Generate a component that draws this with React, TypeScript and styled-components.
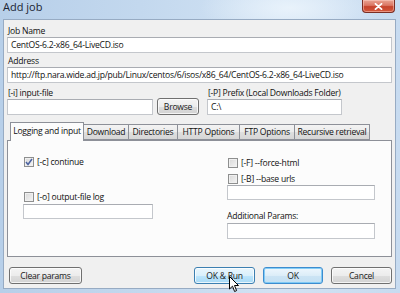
import React from "react";
import styled, { createGlobalStyle } from "styled-components";

const Global = createGlobalStyle`
  html, body { margin: 0; padding: 0; }
  body {
    width: 400px; height: 293px; overflow: hidden;
    font-family: "Open Sans", "Noto Sans", sans-serif;
    font-size: 8.6px; letter-spacing: -0.25px; color: #111;
  }
`;

const Window = styled.div`
  width: 400px;
  height: 293px;
  box-sizing: border-box;
  display: flex;
  flex-direction: column;
  background:
    radial-gradient(ellipse 90px 30px at 290px 8px, rgba(235, 244, 252, 0.9), rgba(235, 244, 252, 0) 100%),
    linear-gradient(90deg, #b7cfe9 0%, #c3d8ee 35%, #d2e3f4 70%, #c7dbf0 100%);
  padding: 0 4px 4px 3px;
`;

const TitleBar = styled.div`
  height: 19px;
  flex: none;
  display: flex;
  align-items: flex-start;
  position: relative;
`;

const Title = styled.div`
  font-size: 11px;
  letter-spacing: 0;
  color: #1a2432;
  line-height: 14px;
`;

const CloseBtn = styled.div`
  position: absolute;
  right: 1px;
  top: 0;
  width: 33px;
  height: 13px;
  border: 1px solid #7a2e24;
  border-top: none;
  border-radius: 0 0 4px 4px;
  background: linear-gradient(180deg, #e9a493 0%, #db7663 45%, #c6432c 55%, #d4583c 100%);
  box-shadow: inset 0 0 0 1px rgba(255, 210, 200, 0.5);
  display: flex;
  align-items: center;
  justify-content: center;
  box-sizing: border-box;
`;

const Client = styled.div`
  flex: 1;
  background: #f0f0f0;
  border: 1px solid #97abc3;
  display: flex;
  flex-direction: column;
  padding: 5px 3px 4px 3px;
  box-sizing: border-box;
`;

const Label = styled.div<{ $indent?: number }>`
  height: 12px;
  line-height: 12px;
  padding-left: ${(p) => p.$indent ?? 1}px;
  white-space: nowrap;
`;

const Input = styled.div<{ $w?: number; $h?: number }>`
  height: ${(p) => p.$h ?? 16}px;
  box-sizing: border-box;
  border: 1px solid #c4c7cc;
  border-top-color: #a9acb2;
  background: #fff;
  padding-left: 3px;
  line-height: ${(p) => (p.$h ?? 16) - 2}px;
  white-space: nowrap;
  overflow: hidden;
  ${(p) => (p.$w ? `width: ${p.$w}px;` : "")}
`;

const Field = styled.div<{ $mb?: number }>`
  display: flex;
  flex-direction: column;
  margin-bottom: ${(p) => p.$mb ?? 0}px;
`;

const FileRow = styled.div`
  display: flex;
  align-items: flex-end;
`;

const Button = styled.div<{ $w: number; $h?: number; $focus?: boolean; $hover?: boolean }>`
  width: ${(p) => p.$w}px;
  height: ${(p) => p.$h ?? 17}px;
  flex: none;
  box-sizing: border-box;
  border: 1px solid ${(p) => (p.$hover ? "#3c7fb1" : p.$focus ? "#3c8ccf" : "#707070")};
  border-radius: 3px;
  background: ${(p) =>
    p.$hover
      ? "linear-gradient(180deg, #eaf6fd 0%, #d9f0fc 50%, #bee6fd 51%, #a7d9f5 100%)"
      : p.$focus
      ? "linear-gradient(180deg, #eef7fd 0%, #dcedf8 50%, #cce4f4 51%, #c4e0f3 100%)"
      : "linear-gradient(180deg, #f4f4f4 0%, #ececec 50%, #dedede 51%, #d2d2d2 100%)"};
  box-shadow: inset 0 0 0 1px ${(p) => (p.$focus ? "rgba(120, 200, 245, 0.9)" : "rgba(255, 255, 255, 0.75)")};
  display: flex;
  align-items: center;
  justify-content: center;
  white-space: nowrap;
  position: relative;
  color: #1a1a1a;
`;

const Tabs = styled.div`
  margin-top: 7px;
  display: flex;
  flex-direction: column;
`;

const TabStrip = styled.div`
  display: flex;
  align-items: flex-end;
  padding-left: 3px;
  height: 18px;
`;

const Tab = styled.div<{ $active?: boolean; $w: number }>`
  width: ${(p) => p.$w}px;
  height: ${(p) => (p.$active ? 19 : 16)}px;
  box-sizing: border-box;
  border: 1px solid #8d9098;
  border-bottom: ${(p) => (p.$active ? "none" : "1px solid #8d9098")};
  border-left-width: ${(p) => (p.$active ? 1 : 0)}px;
  margin-bottom: ${(p) => (p.$active ? -1 : 0)}px;
  background: ${(p) =>
    p.$active ? "#fcfcfc" : "linear-gradient(180deg, #f3f3f3 0%, #ebebeb 50%, #dfdfdf 51%, #d6d6d6 100%)"};
  display: flex;
  align-items: center;
  justify-content: center;
  padding-bottom: ${(p) => (p.$active ? 2 : 0)}px;
  white-space: nowrap;
  position: relative;
  z-index: ${(p) => (p.$active ? 2 : 1)};
`;

const Panel = styled.div`
  height: 117px;
  box-sizing: border-box;
  border: 1px solid #8d9098;
  background: #fcfcfc;
  display: grid;
  grid-template-columns: 204px 1fr;
  align-items: start;
  padding: 15px 0 0 15px;
`;

const Col = styled.div<{ $pt?: number }>`
  display: flex;
  flex-direction: column;
  padding-top: ${(p) => p.$pt ?? 0}px;
`;

const Gap = styled.div<{ $h?: number; $w?: number }>`
  flex: none;
  height: ${(p) => p.$h ?? 0}px;
  width: ${(p) => p.$w ?? 0}px;
`;

const Check = styled.label`
  display: flex;
  align-items: center;
  gap: 3px;
  height: 12px;
  padding-left: 1px;
  white-space: nowrap;
`;

const Box = styled.span`
  width: 10px;
  height: 10px;
  flex: none;
  box-sizing: border-box;
  border: 1px solid #8e8f8f;
  background: linear-gradient(135deg, #d8d8d8 0%, #f4f4f4 100%);
  box-shadow: inset 0 0 0 1px #f0f0f0;
  display: flex;
  align-items: center;
  justify-content: center;
`;

const Footer = styled.div`
  margin-top: auto;
  display: flex;
  align-items: flex-start;
  padding: 0 0 0 2px;
  gap: 8px;
`;

const Spacer = styled.div`
  flex: 1;
`;

const Cursor = styled.svg`
  position: absolute;
  left: 34px;
  top: 8px;
  z-index: 5;
`;

function CheckMark() {
  return (
    <svg width="8" height="8" viewBox="0 0 8 8">
      <path d="M1 4 L3 6.5 L7 1" stroke="#4b62a0" strokeWidth="1.5" fill="none" />
    </svg>
  );
}

function CloseGlyph() {
  return (
    <svg width="9" height="7" viewBox="0 0 9 7">
      <path d="M1.5 0.8 L7.5 6.2 M7.5 0.8 L1.5 6.2" stroke="#fff" strokeWidth="1.8" strokeLinecap="round" />
    </svg>
  );
}

export default function App() {
  return (
    <>
      <Global />
      <Window>
        <TitleBar>
          <Title>Add job</Title>
          <CloseBtn>
            <CloseGlyph />
          </CloseBtn>
        </TitleBar>
        <Client>
          <Field $mb={2}>
            <Label>Job Name</Label>
            <Input>CentOS-6.2-x86_64-LiveCD.iso</Input>
          </Field>
          <Field $mb={4}>
            <Label>Address</Label>
            <Input>http://ftp.nara.wide.ad.jp/pub/Linux/centos/6/isos/x86_64/CentOS-6.2-x86_64-LiveCD.iso</Input>
          </Field>
          <FileRow>
            <Field>
              <Label>[-i] input-file</Label>
              <Input $w={146} />
            </Field>
            <Gap $w={4} />
            <Button $w={42}>Browse</Button>
            <Gap $w={8} />
            <Field>
              <Label>[-P] Prefix (Local Downloads Folder)</Label>
              <Input $w={135}>C:\</Input>
            </Field>
          </FileRow>
          <Tabs>
            <TabStrip>
              <Tab $active $w={74}>Logging and input</Tab>
              <Tab $w={45}>Download</Tab>
              <Tab $w={49}>Directories</Tab>
              <Tab $w={62}>HTTP Options</Tab>
              <Tab $w={55}>FTP Options</Tab>
              <Tab $w={75}>Recursive retrieval</Tab>
            </TabStrip>
            <Panel>
              <Col>
                <Check>
                  <Box>
                    <CheckMark />
                  </Box>
                  [-c] continue
                </Check>
                <Gap $h={23} />
                <Check>
                  <Box />
                  [-o] output-file log
                </Check>
                <Gap $h={1} />
                <Input $w={130} $h={15} />
              </Col>
              <Col $pt={1}>
                <Check>
                  <Box />
                  [-F] --force-html
                </Check>
                <Gap $h={4} />
                <Check>
                  <Box />
                  [-B] --base urls
                </Check>
                <Input $w={148} $h={15} />
                <Gap $h={10} />
                <Label $indent={0}>Additional Params:</Label>
                <Gap $h={1} />
                <Input $w={148} $h={16} />
              </Col>
            </Panel>
          </Tabs>
          <Footer>
            <Button $w={73}>Clear params</Button>
            <Spacer />
            <Button $w={61} $hover>
              OK &amp; Run
              <Cursor width="11" height="17" viewBox="0 0 11 17">
                <path
                  d="M0.5 0.5 L0.5 13 L3.5 10.2 L5.6 15.5 L7.6 14.6 L5.5 9.5 L9.5 9.5 Z"
                  fill="#fff"
                  stroke="#000"
                  strokeWidth="1"
                  strokeLinejoin="round"
                />
              </Cursor>
            </Button>
            <Button $w={60} $focus>
              OK
            </Button>
            <Button $w={61}>Cancel</Button>
          </Footer>
        </Client>
      </Window>
    </>
  );
}
